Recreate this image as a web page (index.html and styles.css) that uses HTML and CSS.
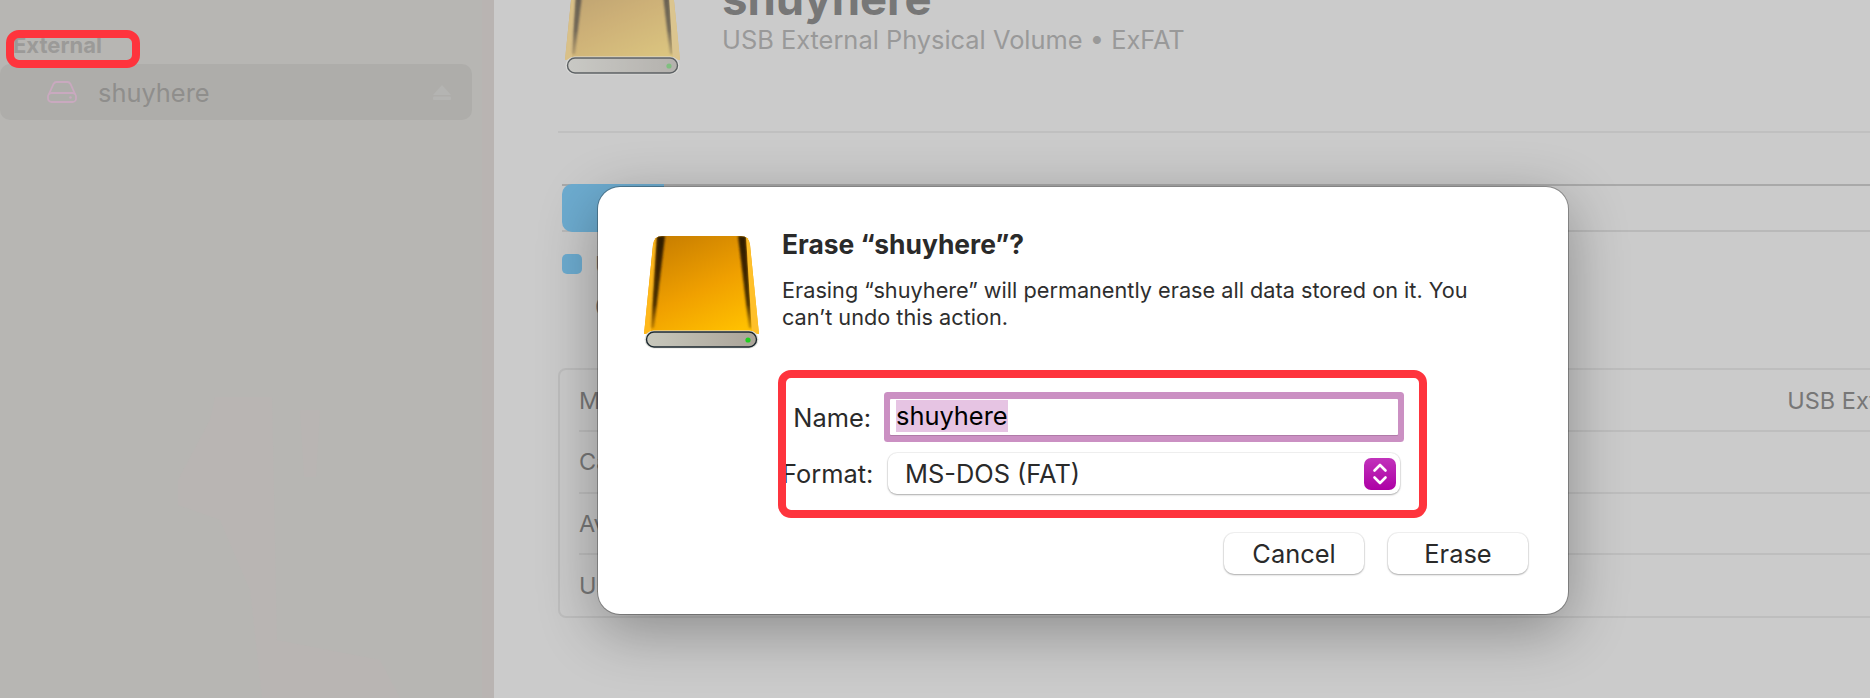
FILE: index.html
```html
<!DOCTYPE html>
<html lang="en">
<head>
<meta charset="utf-8">
<title>Disk Utility</title>
<link rel="stylesheet" href="styles.css">
</head>
<body>
<svg class="defs" width="0" height="0" aria-hidden="true">
  <defs>
    <linearGradient id="bodyFill" x1="0.2" y1="0" x2="0.75" y2="1">
      <stop offset="0" stop-color="#c97f00"/>
      <stop offset="0.55" stop-color="#f0a000"/>
      <stop offset="1" stop-color="#ffc000"/>
    </linearGradient>
    <linearGradient id="barFill" x1="0" y1="0" x2="1" y2="0">
      <stop offset="0" stop-color="#c8c8bc"/>
      <stop offset="1" stop-color="#aaa398"/>
    </linearGradient>
    <linearGradient id="stepFill" x1="0" y1="0" x2="0" y2="1">
      <stop offset="0" stop-color="#c133bb"/>
      <stop offset="1" stop-color="#ad00a5"/>
    </linearGradient>
    <linearGradient id="sheen" x1="0" y1="0" x2="0" y2="1">
      <stop offset="0" stop-color="#2e1c00"/>
      <stop offset="0.75" stop-color="#3a2400" stop-opacity=".9"/>
      <stop offset="1" stop-color="#7a4c00" stop-opacity=".45"/>
    </linearGradient>
    <filter id="soft" x="-50%" y="-5%" width="200%" height="110%">
      <feGaussianBlur stdDeviation="0.9"/>
    </filter>
    <clipPath id="bodyClip">
      <path d="M18 0H97Q105 0 106 9L115 98H0L9 9Q10 0 18 0Z"/>
    </clipPath>
    <symbol id="drive" viewBox="0 0 115 113">
      <path d="M18 0H97Q105 0 106 9L115 98H0L9 9Q10 0 18 0Z" fill="url(#bodyFill)"/>
      <g clip-path="url(#bodyClip)">
        <path d="M9 0H13L7 98H-1Z" fill="#ffb81a"/>
        <path d="M13 0H21L10 92H7Z" fill="url(#sheen)" filter="url(#soft)"/>
        <path d="M102 0H94L105 92H108Z" fill="url(#sheen)" filter="url(#soft)"/>
        <path d="M102 0H106L116 98H108Z" fill="#ffc02a"/>
      </g>
      <rect x="0.5" y="94.5" width="114" height="18" rx="9" fill="#e4e4de"/>
      <rect x="2.5" y="96" width="110" height="15" rx="7.5" fill="url(#barFill)" stroke="#1c2930" stroke-width="1.4"/>
      <circle cx="104" cy="104" r="2.6" fill="#1fd01f"/>
    </symbol>
  </defs>
</svg>
<div class="app">
  <aside class="sidebar">
    <svg class="wallpaper" viewBox="0 0 494 698" aria-hidden="true">
      <path d="M215 397H272L277 640L380 660L400 698H262L250 590L220 520L178 505V480L210 420Z" fill="#b9b5b3"/>
      <path d="M300 410H320L316 477H304Z" fill="#b9b5b3"/>
      <path d="M482 0H494V698H482Z" fill="#b9b4b2"/>
    </svg>
    <div class="section-label">External</div>
    <div class="volume-row">
      <svg class="volume-icon" viewBox="0 0 30 22" aria-hidden="true">
        <path d="M2 13L6.500 3Q7.500 1 9.500 1H20.500Q22.500 1 23.500 3L28 13"/>
        <rect x="1" y="12" width="28" height="9" rx="3.500"/>
        <circle class="dot" cx="23.500" cy="16.500" r="1.300"/>
      </svg>
      <span class="volume-name">shuyhere</span>
      <svg class="eject" viewBox="0 0 18 15" aria-hidden="true">
        <path d="M9 0L18 10H0Z"/>
        <rect y="11.500" width="18" height="3.500" rx="1"/>
      </svg>
    </div>
  </aside>
  <main class="main">
    <header class="header">
      <svg class="header-drive" aria-hidden="true"><use href="#drive"/></svg>
      <div class="header-text">
        <h1 class="title">shuyhere</h1>
        <p class="subtitle">USB External Physical Volume • ExFAT</p>
      </div>
    </header>
    <hr class="divider">
    <div class="usage-bar"><div class="usage-fill"></div></div>
    <div class="legend">
      <span class="swatch"></span>
      <div class="legend-text"><div>Used</div><div>0 KB</div></div>
    </div>
    <div class="info-table">
      <div class="info-row"><span>Mount Point</span><span>USB External Physical Volume</span></div>
      <div class="info-row"><span>Capacity</span><span>31.9 GB</span></div>
      <div class="info-row"><span>Available</span><span>31.9 GB</span></div>
      <div class="info-row"><span>Used</span><span>0 KB</span></div>
    </div>
  </main>
</div>
<div class="annotation annotation-external"></div>
<section class="dialog">
  <div class="dialog-top">
    <svg class="dialog-drive" aria-hidden="true"><use href="#drive"/></svg>
    <div class="dialog-body">
      <h2 class="dialog-title">Erase “shuyhere”?</h2>
      <p class="dialog-message">Erasing “shuyhere” will permanently erase all data stored on it. You can’t undo this action.</p>
      <div class="form">
        <label class="form-label form-label-name">Name:</label>
        <div class="text-field"><span class="selection">shuyhere</span></div>
        <label class="form-label">Format:</label>
        <div class="select">
          <span>MS-DOS (FAT)</span>
          <svg class="stepper" viewBox="0 0 32 32" aria-hidden="true">
            <rect width="32" height="32" rx="7" fill="url(#stepFill)"/>
            <path d="M10.500 12.500L16 7L21.500 12.500M10.500 19.500L16 25L21.500 19.500" fill="none" stroke="#fff" stroke-width="2.600" stroke-linecap="round" stroke-linejoin="round"/>
          </svg>
        </div>
      </div>
    </div>
  </div>
  <div class="actions">
    <button class="btn" type="button">Cancel</button>
    <button class="btn" type="button">Erase</button>
  </div>
  <div class="annotation annotation-form"></div>
</section>
</body>
</html>
```

FILE: styles.css
```css
* { box-sizing: border-box; }
html, body { margin: 0; height: 100%; overflow: hidden; }
body {
  position: relative;
  font-family: Inter, "Liberation Sans", sans-serif;
  background: #cbcbcb;
  color: #2a2a2a;
}
.defs { position: absolute; }
.app { display: flex; height: 698px; overflow: hidden; }

/* Sidebar */
.sidebar {
  position: relative;
  flex: 0 0 494px;
  background: #b7b6b3;
  padding-top: 33px;
}
.wallpaper { position: absolute; inset: 0; width: 494px; height: 698px; }
.section-label {
  position: relative;
  padding-left: 13px;
  height: 31px;
  font-size: 22px;
  line-height: 25px;
  font-weight: 700;
  color: #9b9a98;
}
.volume-row {
  position: relative;
  display: flex;
  align-items: center;
  width: 472px;
  height: 56px;
  padding: 0 21px 0 47px;
  border-radius: 10px;
  background: #aeadaa;
}
.volume-icon { width: 30px; height: 22px; fill: none; stroke: #c9a9bf; stroke-width: 1.8; }
.volume-icon .dot { fill: #c9a9bf; stroke: none; }
.volume-name { margin-left: 21px; font-size: 25.4px; color: #8f8e8c; flex: 1; }
.eject { width: 18px; height: 15px; fill: #b4b4b2; }

/* Main */
.main { flex: 1; min-width: 0; padding-left: 64px; overflow: hidden; }
.header { display: flex; margin: -38px 0 0 7px; height: 113px; }
.header-drive { width: 115px; height: 113px; flex: none; filter: saturate(.55) opacity(.65); }
.header-text { margin: 13px 0 0 42px; }
.title { margin: 0; font-size: 45.5px; line-height: 48px; font-weight: 700; color: #777; white-space: nowrap; }
.subtitle { margin: 2px 0 0; font-size: 25.4px; line-height: 30px; color: #999; white-space: nowrap; }
.divider { margin: 56px 0 0; border: 0; height: 2px; background: #c0c0c0; }
.usage-bar {
  margin: 51px 0 0 4px;
  height: 48px;
  border-top: 2px solid #a9a9a9;
  border-bottom: 2px solid #b9b9b9;
}
.usage-fill {
  width: 102px;
  height: 48px;
  margin-top: -2px;
  background: #6dacd0;
  border-radius: 10px 0 0 10px;
}
.legend { display: flex; gap: 13px; margin: 22px 0 0 4px; height: 114px; }
.swatch { width: 20px; height: 20px; border-radius: 5px; background: #6dacd0; flex: none; }
.legend-text { font-size: 23.5px; line-height: 42px; color: #777; margin-top: -10px; }
.info-table {
  width: 1585px;
  height: 250px;
  padding: 1px 0 0 19px;
  border: 2px solid #bebebe;
  border-radius: 8px;
  display: flex;
  flex-direction: column;
}
.info-row {
  height: 62.5px;
  display: flex;
  justify-content: space-between;
  align-items: center;
  padding-right: 20px;
  font-size: 23.5px;
  color: #777;
  border-bottom: 2px solid #bebebe;
}
.info-row:last-child { border-bottom: 0; }

/* Dialog */
.dialog {
  position: absolute;
  left: 598px;
  top: 187px;
  width: 970px;
  height: 427px;
  padding: 49px 40px 40px 46px;
  background: #fff;
  border-radius: 22px;
  box-shadow: 0 0 0 1px rgba(0,0,0,.28), 0 16px 60px rgba(0,0,0,.32);
}
.dialog-top { display: flex; gap: 23px; }
.dialog-drive { width: 115px; height: 113px; flex: none; }
.dialog-body { flex: 1; min-width: 0; }
.dialog-title { margin: -9px 0 0; font-size: 26.4px; line-height: 34px; font-weight: 700; color: #2a2a2a; }
.dialog-message { margin: 16px 0 0; width: 720px; font-size: 21.7px; line-height: 27px; color: #2e2e2e; }
.form {
  display: grid;
  grid-template-columns: 89px 512px;
  column-gap: 17px;
  margin-top: 68px;
  align-items: center;
}
.form-label { font-size: 25.4px; text-align: right; white-space: nowrap; color: #2a2a2a; }
.form-label-name { margin-bottom: 18px; }
.text-field {
  height: 36px;
  margin: 0 2px 18px 2px;
  padding: 1px 6px;
  background: #fff;
  box-shadow: 0 1px 0 #b07aa8, 0 1px 0 6px #cb90c3, 0 -1px 0 6px #cb90c3;
  border-radius: 1px;
}
.selection {
  display: inline-block;
  background: #e6c4e3;
  color: #000;
  font-size: 25.4px;
  line-height: 32px;
}
.select {
  height: 41px;
  display: flex;
  align-items: center;
  justify-content: space-between;
  padding: 0 4px 0 17px;
  font-size: 25.4px;
  color: #2a2a2a;
  border-radius: 9px;
  background: #fff;
  box-shadow: 0 1px 2px rgba(0,0,0,.3), 0 0 0 1px rgba(0,0,0,.05);
}
.stepper { width: 32px; height: 32px; flex: none; }
.actions { display: flex; justify-content: flex-end; gap: 24px; margin-top: 39px; }
.btn {
  width: 140px;
  height: 41px;
  border: 0;
  border-radius: 10px;
  background: #fff;
  font: 25.4px Inter, "Liberation Sans", sans-serif;
  color: #2a2a2a;
  box-shadow: 0 1px 2px rgba(0,0,0,.3), 0 0 0 1px rgba(0,0,0,.05);
}

/* Red annotations drawn over the screenshot */
.annotation { position: absolute; border: 8px solid #fe343d; border-radius: 13px; }
.annotation-external { left: 6px; top: 30px; width: 134px; height: 38px; }
.annotation-form { left: 180px; top: 183px; width: 649px; height: 148px; }
```
